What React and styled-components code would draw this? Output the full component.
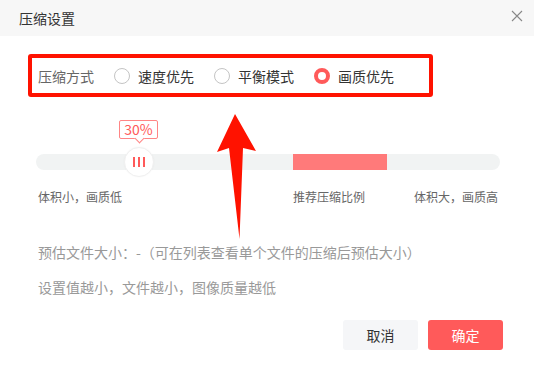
import React from "react";
import styled, { createGlobalStyle } from "styled-components";

const Global = createGlobalStyle`
  html, body { margin: 0; padding: 0; background: #fff; }
  body { font-family: "Noto Sans CJK SC", "Noto Sans", sans-serif; }
  * { box-sizing: border-box; }
`;

const Dialog = styled.div`
  position: relative;
  width: 534px;
  height: 385px;
  background: #fff;
  overflow: hidden;
`;

const Header = styled.div`
  height: 36px;
  background: #f7f7f7;
  display: flex;
  align-items: center;
  justify-content: space-between;
  padding: 0 10px 0 19px;
`;

const Title = styled.div`
  font-size: 14px;
  line-height: 20px;
  color: #333;
`;

const Close = styled.button`
  border: 0;
  background: transparent;
  padding: 0;
  width: 14px;
  height: 14px;
  display: flex;
  align-items: center;
  justify-content: center;
  margin-top: -4px;
`;

const RadioRow = styled.div`
  margin: 18px 0 0 28px;
  width: 405px;
  height: 43px;
  border: 4px solid #ff1200;
  border-radius: 3px;
  display: flex;
  align-items: center;
  padding-left: 6px;
  gap: 20px;
`;

const RowLabel = styled.span`
  font-size: 14px;
  line-height: 20px;
  color: #666;
`;

const Option = styled.label`
  display: flex;
  align-items: center;
  gap: 8px;
  font-size: 14px;
  line-height: 20px;
  color: #333;
`;

const RadioDot = styled.span`
  width: 16px;
  height: 16px;
  border-radius: 50%;
  background: #fff;
  border: ${(p) => (p.$checked ? "4px solid #ff5a5a" : "1px solid #c4c4c4")};
`;

const SliderWrap = styled.div`
  position: relative;
  margin: 57px 34px 0 36px;
`;

const Track = styled.div`
  position: relative;
  height: 16px;
  border-radius: 8px;
  background: #f1f3f3;
`;

const Recommend = styled.div`
  position: absolute;
  top: 0;
  bottom: 0;
  left: 257px;
  width: 94px;
  background: #ff7a7a;
`;

const Thumb = styled.div`
  position: absolute;
  top: -7px;
  left: 88px;
  width: 30px;
  height: 30px;
  border-radius: 50%;
  background: #fff;
  border: 1px solid #f0f0f0;
  box-shadow: 0 0 2px rgba(0, 0, 0, 0.04);
  display: flex;
  align-items: center;
  justify-content: center;
  gap: 3px;
`;

const Bar = styled.span`
  width: 2px;
  height: 10px;
  background: #ff5a5a;
`;

const Tip = styled.div`
  position: absolute;
  left: 83px;
  top: -34px;
  width: 39px;
  height: 19px;
  border: 1px solid #ff8585;
  border-radius: 2px;
  background: #fff;
  color: #ff5a5a;
  font-size: 14px;
  line-height: 17px;
  text-align: center;
  &::after {
    content: "";
    position: absolute;
    left: 50%;
    bottom: -4px;
    width: 6px;
    height: 6px;
    margin-left: -3px;
    background: #fff;
    border-right: 1px solid #ff8585;
    border-bottom: 1px solid #ff8585;
    transform: rotate(45deg);
  }
`;

const Labels = styled.div`
  display: flex;
  margin: 18px 36px 0 38px;
  font-size: 12px;
  line-height: 17px;
  color: #666;
`;

const LabelLeft = styled.span`
  width: 255px;
`;

const LabelRight = styled.span`
  margin-left: auto;
`;

const Info = styled.div`
  margin: ${(p) => p.$mt}px 0 0 38px;
  font-size: 14px;
  line-height: 20px;
  color: #999;
`;

const Footer = styled.div`
  display: flex;
  justify-content: flex-end;
  gap: 10px;
  margin: 23px 31px 0 0;
`;

const Button = styled.button`
  width: 75px;
  height: 30px;
  border: 0;
  border-radius: 3px;
  font-family: inherit;
  font-size: 14px;
  background: ${(p) => (p.$primary ? "#ff5a5a" : "#f5f6f8")};
  color: ${(p) => (p.$primary ? "#fff" : "#333")};
`;

const Arrow = styled.svg`
  position: absolute;
  left: 214px;
  top: 112px;
`;

export default function App() {
  const options = [
    { label: "速度优先", checked: false },
    { label: "平衡模式", checked: false },
    { label: "画质优先", checked: true },
  ];
  return (
    <>
      <Global />
      <Dialog>
        <Header>
          <Title>压缩设置</Title>
          <Close aria-label="close">
            <svg width="12" height="12" viewBox="0 0 12 12">
              <path d="M1 1L11 11M11 1L1 11" stroke="#888" strokeWidth="1.1" fill="none" />
            </svg>
          </Close>
        </Header>
        <RadioRow>
          <RowLabel>压缩方式</RowLabel>
          {options.map((o) => (
            <Option key={o.label}>
              <RadioDot $checked={o.checked} />
              {o.label}
            </Option>
          ))}
        </RadioRow>
        <SliderWrap>
          <Track>
            <Recommend />
          </Track>
          <Tip>30%</Tip>
          <Thumb>
            <Bar />
            <Bar />
            <Bar />
          </Thumb>
        </SliderWrap>
        <Labels>
          <LabelLeft>体积小，画质低</LabelLeft>
          <span>推荐压缩比例</span>
          <LabelRight>体积大，画质高</LabelRight>
        </Labels>
        <Info $mt={37}>预估文件大小：-（可在列表查看单个文件的压缩后预估大小）</Info>
        <Info $mt={15}>设置值越小，文件越小，图像质量越低</Info>
        <Footer>
          <Button>取消</Button>
          <Button $primary>确定</Button>
        </Footer>
        <Arrow width="46" height="130" viewBox="0 0 46 130">
          <polygon points="21,2 42,39 29,36 25.5,127 15,36 3,40" fill="#ff1200" />
        </Arrow>
      </Dialog>
    </>
  );
}
